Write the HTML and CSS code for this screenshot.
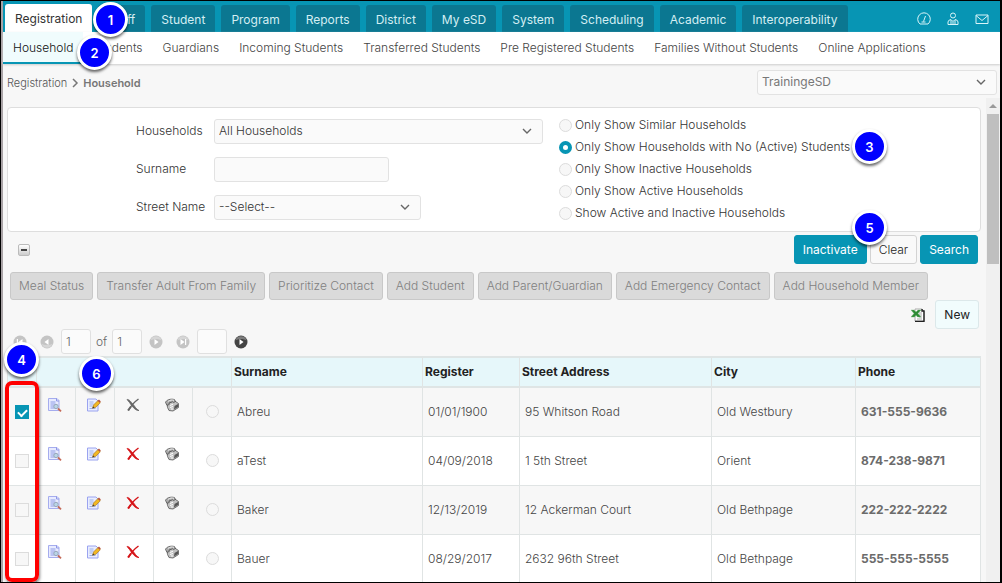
FILE: index.html
```html
<!DOCTYPE html>
<html lang="en">
<head>
<meta charset="utf-8">
<title>Household</title>
<link rel="stylesheet" href="styles.css">
</head>
<body>
<svg class="defs" aria-hidden="true">
  <symbol id="chev" viewBox="0 0 12 12"><path d="M2 4l4 4 4-4" fill="none" stroke="currentColor" stroke-width="1.4"/></symbol>
  <symbol id="view" viewBox="0 0 14 14"><path d="M.5.500h8.500l2 2v10H.500z" fill="#e8ebff" stroke="#a5acee"/><path d="M2.500 4h5M2.500 6h5M2.500 8h4M2.500 10h4" stroke="#8d9ce6"/><path d="M8.500.500v2.500h2.500" fill="none" stroke="#8e97e6"/><circle cx="8" cy="8.500" r="2.200" fill="#b8d4e6" stroke="#9aa8bc"/><path d="M10 10.500l3 2.800" stroke="#c56a58" stroke-width="1.800"/></symbol>
  <symbol id="edit" viewBox="0 0 14 14"><path d="M.5 1h8.500l2 2v10H.500z" fill="#e9edff" stroke="#9aa3f0"/><path d="M2.500 4h4M2.500 6h4M2.500 8h3M2.500 10.500h6" stroke="#9bb0ea"/><path d="M5.500 10.300l1-3.300 4.500-4.500 2.300 2.300L8.800 9.300z" fill="#f2b822" stroke="#a8782a" stroke-width=".7"/><path d="M10.800 2.800L12 1.600l1.800 1.800-1.200 1.300z" fill="#b7503e"/><path d="M5.500 10.300l.6-1.800L7.500 9.600z" fill="#333"/></symbol>
  <symbol id="cross" viewBox="0 0 14 14"><path d="M1 1.500C3 1 5 4 7 6.200 9 8.500 10 11 13 12.600 10 12.500 8 10.500 6 8 4 5.500 3 3.500 1 1.500z" fill="currentColor" stroke="currentColor" stroke-width=".8"/><path d="M12.500 1C9 3.500 5 7.500 2.500 12.500" fill="none" stroke="currentColor" stroke-width="1.400"/><path d="M5 8.500L2 12.500" stroke="currentColor" stroke-width="2"/></symbol>
  <symbol id="phone" viewBox="0 0 14 14"><path d="M2 6l7-3.500 4.500 3v4L8 13 4 12.500 2.500 9.500z" fill="#c0c0c0" stroke="#555" stroke-width=".8"/><path d="M9 11.500l4-2.500V6L9.500 8z" fill="#555"/><path d="M.5 4.500C1 2 6 .3 9.500 1.600l1 1.900L8.500 4.500 7.500 3.800 4 5l.2 1.500-2.200.8z" fill="#aaa" stroke="#444" stroke-width=".7"/><path d="M3 3.400C5 2 7 1.600 9 2.300" stroke="#eee" fill="none"/><path d="M5 7.500l3-1.300M5 9.500l3-1M6 11h2" stroke="#fff"/></symbol>
  <symbol id="next" viewBox="0 0 14 14"><circle cx="7" cy="7" r="6.500" fill="currentColor"/><path d="M1.500 5.500a5.700 5.700 0 0 1 11 0C10 3.500 4 3.500 1.500 5.500z" fill="#fff" opacity=".3"/><path d="M5.500 4l4 3-4 3z" fill="#fff"/></symbol>
  <symbol id="last" viewBox="0 0 14 14"><circle cx="7" cy="7" r="6.500" fill="currentColor"/><path d="M1.500 5.500a5.700 5.700 0 0 1 11 0C10 3.500 4 3.500 1.500 5.500z" fill="#fff" opacity=".3"/><path d="M4.500 4l4 3-4 3zM9 4h1.200v6H9z" fill="#fff"/></symbol>
</svg>
<div class="screen">
  <header class="topbar">
    <nav class="tabs" aria-label="Modules">
      <a class="tab active" href="#">Registration</a><a class="tab" href="#">Staff</a><a class="tab" href="#">Student</a><a class="tab" href="#">Program</a><a class="tab" href="#">Reports</a><a class="tab" href="#">District</a><a class="tab" href="#">My eSD</a><a class="tab" href="#">System</a><a class="tab" href="#">Scheduling</a><a class="tab" href="#">Academic</a><a class="tab" href="#">Interoperability</a>
    </nav>
    <div class="tools">
      <button class="tool" aria-label="Dashboard"><svg viewBox="0 0 14 14"><path d="M3 12a6.300 6.300 0 1 1 8 0z"/><path d="M6.500 9.500L8.500 4M4.500 10h4"/></svg></button>
      <button class="tool" aria-label="Profile"><svg viewBox="0 0 14 14"><circle cx="7" cy="3.500" r="2.500"/><path d="M2 12.500V10q0-2 3-2.500l2 2 2-2q3 .5 3 2.500v2.500zM5 8v4M9 8v4M7 9.500v3"/></svg></button>
      <button class="tool" aria-label="Messages"><svg viewBox="0 0 14 14"><path d="M1 3h12v8.500H1zM1 3.500l6 5 6-5"/></svg></button>
    </div>
  </header>
  <nav class="subnav" aria-label="Registration">
    <a class="active" href="#">Household</a><a href="#">Students</a><a href="#">Guardians</a><a href="#">Incoming Students</a><a href="#">Transferred Students</a><a href="#">Pre Registered Students</a><a href="#">Families Without Students</a><a href="#">Online Applications</a>
  </nav>
  <div class="crumbs">
    <div class="trail"><a href="#">Registration</a><svg viewBox="0 0 8 10"><path d="M2 1l4 4-4 4" fill="none" stroke="#777" stroke-width="1.500"/></svg><b>Household</b></div>
    <div class="select site"><select aria-label="District"><option>TrainingeSD</option></select><svg><use href="#chev"/></svg></div>
  </div>
  <div class="body">
    <main>
      <form class="filters">
        <div class="fields">
          <label for="hh">Households</label>
          <div class="select wide"><select id="hh"><option>All Households</option></select><svg><use href="#chev"/></svg></div>
          <label for="sn">Surname</label>
          <input class="text" id="sn" type="text">
          <label for="st">Street Name</label>
          <div class="select mid"><select id="st"><option>--Select--</option></select><svg><use href="#chev"/></svg></div>
        </div>
        <div class="options">
          <label><input type="radio" name="show">Only Show Similar Households</label>
          <label><input type="radio" name="show" checked>Only Show Households with No (Active) Students</label>
          <label><input type="radio" name="show">Only Show Inactive Households</label>
          <label><input type="radio" name="show">Only Show Active Households</label>
          <label><input type="radio" name="show">Show Active and Inactive Households</label>
        </div>
      </form>
      <div class="actions">
        <button class="collapse" aria-label="Collapse filters"></button>
        <div class="group"><button class="btn primary">Inactivate</button><button class="btn">Clear</button><button class="btn primary">Search</button></div>
      </div>
      <div class="bulk">
        <button class="btn" disabled>Meal Status</button><button class="btn" disabled>Transfer Adult From Family</button><button class="btn" disabled>Prioritize Contact</button><button class="btn" disabled>Add Student</button><button class="btn" disabled>Add Parent/Guardian</button><button class="btn" disabled>Add Emergency Contact</button><button class="btn" disabled>Add Household Member</button>
      </div>
      <div class="newrow">
        <button class="icon" aria-label="Export to Excel"><svg viewBox="0 0 14 14"><path d="M4 1h7l2 2v10H4z" fill="#fff" stroke="#aaa"/><path d="M11 1v2h2v10.500H4" fill="none" stroke="#222" stroke-width="1.400"/><path d="M8 5h3M8 7h3M8 9h3M6 11h5" stroke="#aaa"/><path d="M0 2h3l2 2 2-2h3L7 5.500 10 9H6.500L5 7.200 3.500 9H0l3-3.500z" fill="#2e8b35" stroke="#75b678" stroke-width=".4"/></svg></button>
        <button class="btn new">New</button>
      </div>
      <div class="pager">
        <div class="pair">
          <button class="icon off flip" disabled aria-label="First page"><svg><use href="#last"/></svg></button>
          <button class="icon off flip" disabled aria-label="Previous page"><svg><use href="#next"/></svg></button>
        </div>
        <div class="range"><input class="page" type="text" value="1" aria-label="Page"><span>of</span><input class="page" type="text" value="1" aria-label="Total pages"></div>
        <div class="pair">
          <button class="icon off" disabled aria-label="Next page"><svg><use href="#next"/></svg></button>
          <button class="icon off" disabled aria-label="Last page"><svg><use href="#last"/></svg></button>
        </div>
        <input class="page" type="text" aria-label="Go to page">
        <button class="icon go" aria-label="Go"><svg><use href="#next"/></svg></button>
      </div>
      <table>
        <colgroup><col class="c-check"><col class="c-icon"><col class="c-icon"><col class="c-icon"><col class="c-icon"><col class="c-icon"><col class="c-name"><col class="c-date"><col class="c-street"><col class="c-city"><col class="c-phone"></colgroup>
        <thead><tr><th></th><th colspan="5"></th><th>Surname</th><th>Register</th><th>Street Address</th><th>City</th><th>Phone</th></tr></thead>
        <tbody>
          <tr><td class="c"><input type="checkbox" aria-label="Select Abreu" checked></td><td class="i"><button class="icon" aria-label="View"><svg><use href="#view"/></svg></button></td><td class="i"><button class="icon" aria-label="Edit"><svg><use href="#edit"/></svg></button></td><td class="i"><button class="icon gray" aria-label="Delete"><svg><use href="#cross"/></svg></button></td><td class="i"><button class="icon" aria-label="Call"><svg><use href="#phone"/></svg></button></td><td class="c"><input type="radio" name="row" aria-label="Abreu"></td><td>Abreu</td><td>01/01/1900</td><td>95 Whitson Road</td><td>Old Westbury</td><td><b>631-555-9636</b></td></tr>
          <tr><td class="c"><input type="checkbox" aria-label="Select aTest"></td><td class="i"><button class="icon" aria-label="View"><svg><use href="#view"/></svg></button></td><td class="i"><button class="icon" aria-label="Edit"><svg><use href="#edit"/></svg></button></td><td class="i"><button class="icon red" aria-label="Delete"><svg><use href="#cross"/></svg></button></td><td class="i"><button class="icon" aria-label="Call"><svg><use href="#phone"/></svg></button></td><td class="c"><input type="radio" name="row" aria-label="aTest"></td><td>aTest</td><td>04/09/2018</td><td>1 5th Street</td><td>Orient</td><td><b>874-238-9871</b></td></tr>
          <tr><td class="c"><input type="checkbox" aria-label="Select Baker"></td><td class="i"><button class="icon" aria-label="View"><svg><use href="#view"/></svg></button></td><td class="i"><button class="icon" aria-label="Edit"><svg><use href="#edit"/></svg></button></td><td class="i"><button class="icon red" aria-label="Delete"><svg><use href="#cross"/></svg></button></td><td class="i"><button class="icon" aria-label="Call"><svg><use href="#phone"/></svg></button></td><td class="c"><input type="radio" name="row" aria-label="Baker"></td><td>Baker</td><td>12/13/2019</td><td>12 Ackerman Court</td><td>Old Bethpage</td><td><b>222-222-2222</b></td></tr>
          <tr><td class="c"><input type="checkbox" aria-label="Select Bauer"></td><td class="i"><button class="icon" aria-label="View"><svg><use href="#view"/></svg></button></td><td class="i"><button class="icon" aria-label="Edit"><svg><use href="#edit"/></svg></button></td><td class="i"><button class="icon red" aria-label="Delete"><svg><use href="#cross"/></svg></button></td><td class="i"><button class="icon" aria-label="Call"><svg><use href="#phone"/></svg></button></td><td class="c"><input type="radio" name="row" aria-label="Bauer"></td><td>Bauer</td><td>08/29/2017</td><td>2632 96th Street</td><td>Old Bethpage</td><td><b>555-555-5555</b></td></tr>
        </tbody>
      </table>
    </main>
    <div class="scroll"><div class="arrow"></div><div class="thumb"></div></div>
  </div>
  <div class="outline"></div>
  <span class="pin p1">1</span><span class="pin p2">2</span><span class="pin p3">3</span><span class="pin p4">4</span><span class="pin p5">5</span><span class="pin p6">6</span>
</div>
</body>
</html>
```

FILE: styles.css
```css
* { box-sizing: border-box; }
body { margin: 0; font: 12px/16px Inter, "Liberation Sans", sans-serif; color: #555; background: #000; }
a { color: inherit; text-decoration: none; }
button, input, select { font: inherit; color: inherit; margin: 0; }
.defs { position: absolute; width: 0; height: 0; }
.screen { position: relative; height: 100vh; overflow: hidden; display: flex; flex-direction: column; border: 1px solid #000; border-right-width: 2px; background: #f7f7f7; box-shadow: inset 2px 0 #a9a3a6; padding-left: 2px; }

.topbar { display: flex; justify-content: space-between; background: #0795b4; flex: none; height: 31px; }
.tabs { display: flex; gap: 6px; align-items: flex-end; padding-left: 2px; }
.tab { height: 27px; padding: 7px 10px 0; border-radius: 3px 3px 0 0; background: #0b7791; color: #d4eef3; white-space: nowrap; }
.tab.active { height: 28px; background: #fff; color: #333; }
.tools { display: flex; align-items: center; gap: 15px; padding: 4px 11px 0 0; }
.tool { border: 0; padding: 0; background: none; width: 14px; height: 14px; }
.tool svg { display: block; width: 14px; height: 14px; fill: none; stroke: #d9f4f8; }

.subnav { display: flex; flex: none; height: 32px; background: #fff; color: #444; font-weight: 300; box-shadow: 0 1px 2px #ccc; }
.subnav a { padding: 8px 10px; white-space: nowrap; }
.subnav .active { color: #111; background: #f0fcfd; border-bottom: 2px solid #0795b4; }

.crumbs { display: flex; flex: none; justify-content: space-between; align-items: center; padding: 6px 3px 3px 4px; font-size: 11px; color: #777; }
.trail { display: flex; align-items: center; gap: 4px; font-weight: 300; }
.trail a { color: #555; }
.trail svg { width: 8px; height: 10px; }
.trail b { font-weight: 600; }
.site { width: 240px; font-size: 12px; }

.select { position: relative; }
.select select, .text { display: block; width: 100%; height: 25px; padding: 0 4px 2px; border: 1px solid #e2e2e2; border-radius: 3px; background: #fafafa; appearance: none; outline: 0; }
.select svg { position: absolute; right: 10px; top: 6px; width: 12px; height: 12px; pointer-events: none; color: #666; }

.body { display: flex; flex: 1; min-height: 0; font-weight: 300; }
main { flex: 1; min-width: 0; padding: 9px 5px 0 4px; overflow: hidden; }
.scroll { flex: none; width: 14px; background: #f0f0f0; }
.arrow { width: 0; margin: 6px auto 6px; border: 4px solid transparent; border-top: 0; border-bottom-color: #999; }
.thumb { height: 150px; margin: 0 1px; background: #bfbfbf; }

.filters { display: flex; gap: 15px; border: 1px solid #dedede; border-radius: 4px; background: #fff; padding: 11px 0 10px; padding-left: 128px; color: #333; }
.fields { display: grid; grid-template-columns: 78px 329px; row-gap: 13px; align-content: start; align-items: center; }
.fields label { padding-bottom: 2px; }
.text { width: 175px; }
.mid { width: 207px; }
.options { display: flex; flex-direction: column; gap: 6px; padding-left: 1px; margin-top: -2px; }
.options label { display: flex; align-items: center; gap: 3px; white-space: nowrap; }
input[type="radio"], input[type="checkbox"] { appearance: none; display: block; flex: none; width: 13px; height: 13px; border: 1px solid #dcdcdc; border-radius: 50%; background: #f7f7f7; }
input[type="radio"]:checked { border: 4px solid #0795b4; background: #fff; }
input[type="checkbox"] { width: 14px; height: 14px; border-radius: 0; }
input[type="checkbox"]:checked { border-color: #0795b4; background: #0795b4; }
input[type="checkbox"]:checked::after { content: ""; display: block; width: 7px; height: 4px; margin: 3px 0 0 2px; border: solid #fff; border-width: 0 0 2px 2px; transform: rotate(-45deg); }

.actions { display: flex; align-items: center; justify-content: space-between; padding: 3px 3px 0 11px; }
.collapse { width: 12px; height: 12px; padding: 0; border: 1px solid #bbb; border-radius: 2px; background: linear-gradient(#fff, #ccc); }
.collapse::after { content: ""; display: block; width: 6px; height: 2px; margin: 0 auto; background: #444; }
.group { display: flex; gap: 3px; }
.btn { height: 29px; padding: 0 8px; border: 1px solid #d3d3d3; border-radius: 3px; background: #f9f9f9; color: #222; white-space: nowrap; }
.primary { background: #0795b4; border-color: #0795b4; color: #fff; font-weight: 400; }
.bulk { display: flex; gap: 4px; padding: 8px 0 0 3px; }
.bulk .btn { height: 28px; background: #dadada; border-color: #c8c8c8; color: #808080; }
.newrow { display: flex; justify-content: flex-end; align-items: center; gap: 10px; padding-right: 2px; }
.new { background: #f1fcfd; border-color: #dce8ea; font-weight: 400; }
.icon { display: block; width: 14px; height: 14px; border: 0; padding: 0; background: none; }
.icon svg { display: block; width: 14px; height: 14px; }
.gray { color: #666; }
.red { color: #d51317; }
.pager { display: flex; align-items: center; gap: 7px; padding: 0 6px 2px; color: #666; }
.pair { display: flex; gap: 13px; }
.off { color: #c4c4c4; }
.go { color: #444; }
.flip svg { transform: rotate(180deg); }
.range { display: flex; align-items: center; gap: 5px; }
.page { width: 30px; height: 25px; padding: 0 4px; border: 1px solid #e0e0e0; border-radius: 3px; background: #fbfbfb; }

table { width: 100%; table-layout: fixed; border-collapse: collapse; color: #444; }
.c-check { width: 29px; }
.c-icon { width: 39px; }
.c-name { width: 191px; }
.c-date { width: 97px; }
.c-street { width: 192px; }
.c-city { width: 144px; }
th, td { border: 1px solid #e0e4e4; text-align: left; white-space: nowrap; }
th { height: 30px; padding: 0 2px; background: #e6f7fa; color: #222; font-weight: 700; border-top: 2px solid #dfe5e5; border-bottom: 2px solid #dfe5e5; }
td { height: 49px; padding: 0 5px; background: #fff; }
tr:nth-child(odd) td { background: #f7f7f7; }
td b { font-weight: 700; color: #6b6b6b; }
td.c { padding: 0; }
.c input { margin: 0 auto; }
td.i { padding: 10px 0 0 11px; vertical-align: top; }

.outline { position: absolute; left: 4px; top: 380px; bottom: 0; width: 34px; border: 4px solid #f00; border-radius: 7px; box-shadow: 1px 2px 3px #0007; }
.pin { position: absolute; display: grid; place-items: center; width: 35px; height: 35px; border: 3px solid #fff; border-radius: 50%; background: #00f; color: #fff; font-size: 13px; font-weight: 600; box-shadow: 0 2px 3px #0009; }
.p1 { left: 92px; top: 1px; }
.p2 { left: 76px; top: 34px; }
.p3 { left: 851px; top: 128px; }
.p4 { left: 3px; top: 341px; }
.p5 { left: 851px; top: 209px; }
.p6 { left: 78px; top: 355px; }
```
